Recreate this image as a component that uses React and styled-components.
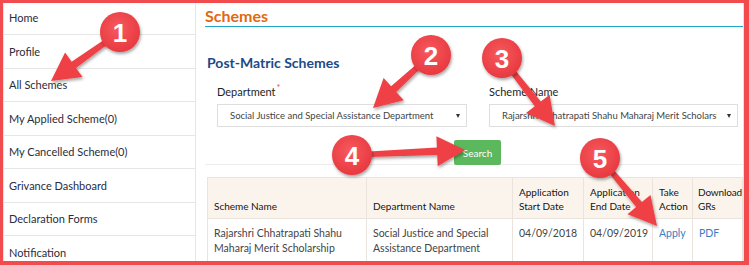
import React from "react";
import styled, { createGlobalStyle } from "styled-components";

const GlobalStyle = createGlobalStyle`
  html, body { margin: 0; padding: 0; background: #fff; }
  body { font-family: Lato, "Open Sans", sans-serif; }
  * { box-sizing: border-box; }
`;

const Frame = styled.div`
  position: relative;
  width: 749px;
  height: 265px;
  border-style: solid;
  border-color: #f24b4e;
  border-width: 3px 5px 4px 3px;
  overflow: hidden;
  display: flex;
  background: #fff;
`;

const Sidebar = styled.nav`
  width: 193px;
  flex: none;
  display: flex;
  flex-direction: column;
  margin-top: -1.5px;
`;

const NavItem = styled.div`
  height: 33.5px;
  flex: none;
  display: flex;
  align-items: center;
  padding-left: 5px;
  border: 1px solid #e6e6e6;
  border-top: none;
  font-size: 11px;
  color: #2c2c3a;
`;

const Main = styled.main`
  flex: 1;
  padding-left: 9px;
  border-right: 2px solid #e2e2e2;
  display: flex;
  flex-direction: column;
`;

const PageTitle = styled.h1`
  margin: 0;
  height: 28px;
  padding-top: 3px;
  font-size: 16px;
  line-height: 20px;
  font-weight: 700;
  color: #e4680e;
  border-bottom: 1px solid #1fa8cb;
`;

const SectionTitle = styled.h2`
  margin: 27px 0 0 2px;
  font-size: 14px;
  line-height: 18px;
  font-weight: 700;
  color: #1d4a89;
`;

const FormPanel = styled.div`
  margin-top: 13px;
  padding-left: 12px;
  border-bottom: 1px solid #ececec;
  display: flex;
  flex-direction: column;
`;

const FieldRow = styled.div`
  display: grid;
  grid-template-columns: 250px 249px;
  column-gap: 22px;
`;

const Field = styled.div`
  display: flex;
  flex-direction: column;
`;

const Label = styled.label`
  font-size: 11px;
  line-height: 14px;
  color: #1e1e1e;
  margin-bottom: 5px;
`;

const Required = styled.sup`
  color: #e8474b;
  font-size: 9px;
  line-height: 0;
  margin-left: 1px;
`;

const FakeSelect = styled.div`
  position: relative;
  height: 23px;
  border: 1px solid #dedede;
  padding: 0 20px 0 12px;
  display: flex;
  align-items: center;
  font-size: 9.5px;
  color: #444;
  &::after {
    content: "";
    position: absolute;
    right: 6px;
    top: 9px;
    border-left: 2.5px solid transparent;
    border-right: 2.5px solid transparent;
    border-top: 4px solid #333;
  }
`;

const SelectValue = styled.span`
  flex: 1;
  white-space: nowrap;
  overflow: hidden;
`;

const ButtonRow = styled.div`
  display: flex;
  padding-left: 237px;
  margin-top: 13px;
  margin-bottom: -1px;
`;

const SearchButton = styled.button`
  width: 47px;
  height: 25px;
  border: none;
  border-radius: 2px;
  background: #5cb85c;
  color: #fff;
  font-family: inherit;
  font-size: 10px;
  padding: 0;
`;

const Table = styled.table`
  margin: 12px 0 0 2px;
  width: 535px;
  border-collapse: collapse;
  table-layout: fixed;
  font-size: 10.5px;
`;

const Th = styled.th`
  height: 41px;
  background: #fbf4ec;
  border: 1px solid #ebe4dc;
  padding: 0 ${(p) => (p.$tight ? 3 : 6)}px 5px ${(p) => (p.$tight ? 5 : 6)}px;
  vertical-align: bottom;
  text-align: left;
  font-weight: 400;
  font-size: 10px;
  line-height: 14px;
  letter-spacing: ${(p) => (p.$tight ? "-0.15px" : "0")};
  color: #141414;
`;

const Td = styled.td`
  border: 1px solid #ebe4dc;
  padding: 7px 6px 8px;
  vertical-align: top;
  line-height: 15px;
  color: #444;
`;

const Link = styled.a`
  color: #3a7cc4;
  text-decoration: none;
`;

const Overlay = styled.svg`
  position: absolute;
  left: -3px;
  top: -3px;
  width: 749px;
  height: 265px;
  pointer-events: none;
`;

const MarkerNumber = styled.text`
  font-family: "Liberation Sans", Arial, sans-serif;
  font-size: 26px;
  font-weight: 700;
  fill: #fff;
`;

function arrowPath(x1, y1, x2, y2) {
  const headLen = 28;
  const headHalf = 15;
  const tail = 2.5;
  const neck = 3.8;
  const dx = x2 - x1;
  const dy = y2 - y1;
  const len = Math.hypot(dx, dy);
  const ux = dx / len;
  const uy = dy / len;
  const px = -uy;
  const py = ux;
  const bx = x2 - ux * headLen;
  const by = y2 - uy * headLen;
  const pts = [
    [x1 + px * tail, y1 + py * tail],
    [bx + px * neck, by + py * neck],
    [bx + px * headHalf, by + py * headHalf],
    [x2, y2],
    [bx - px * headHalf, by - py * headHalf],
    [bx - px * neck, by - py * neck],
    [x1 - px * tail, y1 - py * tail],
  ];
  return pts.map((p) => p.map((v) => v.toFixed(1)).join(",")).join(" ");
}

const markers = [
  { n: 1, cx: 120, cy: 32, tx: 51, ty: 81 },
  { n: 2, cx: 431, cy: 55, tx: 373, ty: 108 },
  { n: 3, cx: 502, cy: 58, tx: 555, ty: 126 },
  { n: 4, cx: 352, cy: 155, tx: 465, ty: 150 },
  { n: 5, cx: 600, cy: 158, tx: 657, ty: 226 },
];

const navItems = [
  "Home",
  "Profile",
  "All Schemes",
  "My Applied Scheme(0)",
  "My Cancelled Scheme(0)",
  "Grivance Dashboard",
  "Declaration Forms",
  "Notification",
];

export default function App() {
  return (
    <>
      <GlobalStyle />
      <Frame>
        <Sidebar>
          {navItems.map((item) => (
            <NavItem key={item}>{item}</NavItem>
          ))}
        </Sidebar>
        <Main>
          <PageTitle>Schemes</PageTitle>
          <SectionTitle>Post-Matric Schemes</SectionTitle>
          <FormPanel>
            <FieldRow>
              <Field>
                <Label>
                  Department<Required>*</Required>
                </Label>
                <FakeSelect>
                  <SelectValue>Social Justice and Special Assistance Department</SelectValue>
                </FakeSelect>
              </Field>
              <Field>
                <Label>Scheme Name</Label>
                <FakeSelect>
                  <SelectValue>Rajarshri Chhatrapati Shahu Maharaj Merit Scholarship</SelectValue>
                </FakeSelect>
              </Field>
            </FieldRow>
            <ButtonRow>
              <SearchButton>Search</SearchButton>
            </ButtonRow>
          </FormPanel>
          <Table>
            <colgroup>
              <col style={{ width: 159 }} />
              <col style={{ width: 146 }} />
              <col style={{ width: 71 }} />
              <col style={{ width: 69 }} />
              <col style={{ width: 40 }} />
              <col style={{ width: 50 }} />
            </colgroup>
            <thead>
              <tr>
                <Th>Scheme Name</Th>
                <Th>Department Name</Th>
                <Th>Application Start Date</Th>
                <Th>Application End Date</Th>
                <Th>Take Action</Th>
                <Th $tight>Download GRs</Th>
              </tr>
            </thead>
            <tbody>
              <tr>
                <Td>Rajarshri Chhatrapati Shahu Maharaj Merit Scholarship</Td>
                <Td>Social Justice and Special Assistance Department</Td>
                <Td>04/09/2018</Td>
                <Td>04/09/2019</Td>
                <Td>
                  <Link href="#">Apply</Link>
                </Td>
                <Td>
                  <Link href="#">PDF</Link>
                </Td>
              </tr>
            </tbody>
          </Table>
        </Main>
        <Overlay viewBox="0 0 749 265">
          <defs>
            <filter id="shadow" x="-30%" y="-30%" width="160%" height="160%">
              <feDropShadow dx="1" dy="2" stdDeviation="1.6" floodColor="#000" floodOpacity="0.35" />
            </filter>
            <radialGradient id="disc" cx="45%" cy="40%" r="60%">
              <stop offset="0%" stopColor="#f65a5f" />
              <stop offset="100%" stopColor="#e8393f" />
            </radialGradient>
          </defs>
          {markers.map((m) => (
            <polygon
              key={`a${m.n}`}
              points={arrowPath(m.cx, m.cy, m.tx, m.ty)}
              fill="#ee4045"
              filter="url(#shadow)"
            />
          ))}
          {markers.map((m) => (
            <g key={`c${m.n}`}>
              <circle cx={m.cx} cy={m.cy} r="20" fill="url(#disc)" filter="url(#shadow)" />
              <MarkerNumber x={m.cx} y={m.cy + 9.5} textAnchor="middle">
                {m.n}
              </MarkerNumber>
            </g>
          ))}
        </Overlay>
      </Frame>
    </>
  );
}
